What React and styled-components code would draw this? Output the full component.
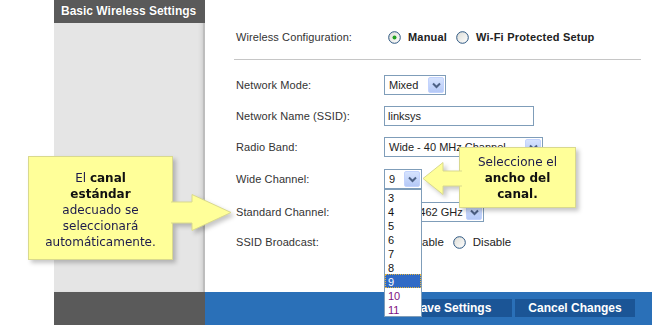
import React from "react";
import styled, { createGlobalStyle } from "styled-components";

// ---------- STYLES ----------
const Global = createGlobalStyle`
  html, body { margin: 0; padding: 0; }
  body {
    width: 652px;
    height: 325px;
    overflow: hidden;
    background: #fff;
    font-family: "Liberation Sans", Arial, sans-serif;
  }
`;

const Page = styled.div`
  position: relative;
  display: grid;
  grid-template-columns: 54px 151px 1fr;
  grid-template-rows: 292px 33px;
  width: 652px;
  height: 325px;
`;

const Gutter = styled.div`
  grid-row: 1 / 3;
  background: #fff;
`;

const Sidebar = styled.div`
  display: flex;
  flex-direction: column;
  background: #e5e5e5;
  box-shadow: inset -2px 0 0 #bdbdbd, inset -5px 0 4px -2px #c9c9c9;
`;

const SideHeader = styled.div`
  height: 23px;
  background: #5a5a5a;
  color: #fff;
  font-size: 12px;
  font-weight: bold;
  line-height: 23px;
  padding-left: 7px;
  text-shadow: 0 0 1px rgba(0, 0, 0, 0.4);
`;

const SideFooter = styled.div`
  background: #5a5a5a;
`;

const Main = styled.div`
  display: flex;
  flex-direction: column;
  padding: 27px 11px 0 31px;
`;

const Row = styled.div`
  display: flex;
  align-items: center;
  height: 20px;
  margin-top: ${(p) => p.$mt || 0}px;
`;

const Label = styled.div`
  width: 148px;
  font-size: 11px;
  color: #333;
  letter-spacing: 0.1px;
`;

const Divider = styled.div`
  height: 1px;
  background: #c6c6c6;
  margin: 12px 0 15px -2px;
`;

const RadioGroup = styled.div`
  display: flex;
  align-items: center;
  gap: 7px;
  margin-left: ${(p) => p.$offset || 0}px;
`;

const RadioText = styled.span`
  font-size: ${(p) => (p.$bold ? 11 : 11.5)}px;
  font-weight: ${(p) => (p.$bold ? "bold" : "normal")};
  letter-spacing: ${(p) => (p.$bold ? 0.2 : 0)}px;
  color: #222;
  margin-right: 2px;
`;

const SelectBox = styled.div`
  position: relative;
  display: flex;
  align-items: center;
  justify-content: space-between;
  box-sizing: border-box;
  width: ${(p) => p.$w}px;
  height: 20px;
  border: 1px solid #7f9db9;
  background: #fff;
  padding: 0 1px 0 4px;
  font-size: 11px;
  color: #222;
`;

const ArrowBtn = styled.div`
  width: 16px;
  height: 16px;
  box-sizing: border-box;
  border: 1px solid #c3d3fd;
  border-radius: 2px;
  background: linear-gradient(#d6e3fe, #b5c9f7);
  display: flex;
  align-items: center;
  justify-content: center;
`;

const TextInput = styled.div`
  box-sizing: border-box;
  width: 150px;
  height: 20px;
  border: 1px solid #7f9db9;
  padding: 0 3px;
  font-size: 11px;
  line-height: 18px;
  color: #222;
`;

const List = styled.div`
  position: absolute;
  left: -1px;
  top: 19px;
  width: 38px;
  box-sizing: border-box;
  border: 1px solid #7f9db9;
  background: #fff;
  z-index: 5;
`;

const ListItem = styled.div`
  height: 14px;
  line-height: 14px;
  font-size: 11px;
  padding-left: 2px;
  box-sizing: border-box;
  color: ${(p) => (p.$active ? "#fff" : p.$visited ? "#80117f" : "#111")};
  background: ${(p) => (p.$active ? "#316ac5" : "transparent")};
  border: 1px dotted ${(p) => (p.$active ? "#e5b53d" : "transparent")};
`;

const Footer = styled.div`
  display: flex;
  align-items: flex-start;
  justify-content: flex-end;
  gap: 3px;
  padding: 7px 17px 0 0;
  background: #2a70b8;
`;

const Button = styled.div`
  width: 120px;
  height: 18px;
  background: #1b5596;
  color: #fff;
  font-size: 12px;
  font-weight: bold;
  line-height: 18px;
  text-align: center;
`;

const Callout = styled.div`
  position: absolute;
  left: ${(p) => p.$x}px;
  top: ${(p) => p.$y}px;
  z-index: 10;
  filter: drop-shadow(3px 3px 2px rgba(0, 0, 0, 0.22));
`;

const Bubble = styled.div`
  position: relative;
  box-sizing: border-box;
  width: ${(p) => p.$w}px;
  height: ${(p) => p.$h}px;
  margin-left: ${(p) => p.$ml || 0}px;
  background: #ffff99;
  border: 1px solid #d9d98e;
  padding-top: ${(p) => p.$pt}px;
  text-align: center;
  font-family: "DejaVu Sans", Verdana, sans-serif;
  font-size: 12px;
  line-height: 16px;
  color: #1c1a4c;
  z-index: 1;

  b {
    color: #111;
  }
`;

const Pointer = styled.svg`
  position: absolute;
  left: ${(p) => p.$x}px;
  top: ${(p) => p.$y}px;
  z-index: 2;
`;

// ---------- ICONS ----------
const Radio = ({ checked }) => (
  <svg width="13" height="13" viewBox="0 0 13 13">
    <defs>
      <linearGradient id="rg" x1="0" y1="0" x2="1" y2="1">
        <stop offset="0" stopColor="#dcdcd6" />
        <stop offset="1" stopColor="#ffffff" />
      </linearGradient>
    </defs>
    <circle cx="6.5" cy="6.5" r="5.8" fill="url(#rg)" stroke="#2b5681" strokeWidth="1" />
    {checked && <circle cx="6.5" cy="6.5" r="2" fill="#21a121" />}
  </svg>
);

const Chevron = () => (
  <svg width="9" height="7" viewBox="0 0 9 7">
    <path d="M1 1.5 L4.5 5 L8 1.5" fill="none" stroke="#4d6185" strokeWidth="2" />
  </svg>
);

const Select = ({ w, value, children }) => (
  <SelectBox $w={w}>
    <span>{value}</span>
    <ArrowBtn>
      <Chevron />
    </ArrowBtn>
    {children}
  </SelectBox>
);

const channels = [3, 4, 5, 6, 7, 8, 9, 10, 11];

// ---------- COMPONENT ----------
export default function App() {
  return (
    <>
      <Global />
      <Page>
        <Gutter />
        <Sidebar>
          <SideHeader>Basic Wireless Settings</SideHeader>
        </Sidebar>

        <Main>
          <Row>
            <Label>Wireless Configuration:</Label>
            <RadioGroup $offset={4}>
              <Radio checked />
              <RadioText $bold>Manual</RadioText>
              <Radio />
              <RadioText $bold>Wi-Fi Protected Setup</RadioText>
            </RadioGroup>
          </Row>

          <Divider />

          <Row>
            <Label>Network Mode:</Label>
            <Select w={62} value="Mixed" />
          </Row>
          <Row $mt={11}>
            <Label>Network Name (SSID):</Label>
            <TextInput>linksys</TextInput>
          </Row>
          <Row $mt={11}>
            <Label>Radio Band:</Label>
            <Select w={159} value="Wide - 40 MHz Channel" />
          </Row>
          <Row $mt={12}>
            <Label>Wide Channel:</Label>
            <Select w={38} value="9">
              <List>
                {channels.map((c) => (
                  <ListItem key={c} $active={c === 9} $visited={c > 9}>
                    {c}
                  </ListItem>
                ))}
              </List>
            </Select>
          </Row>
          <Row $mt={13}>
            <Label>Standard Channel:</Label>
            <Select w={100} value="11 - 2.462 GHz" />
          </Row>
          <Row $mt={10}>
            <Label>SSID Broadcast:</Label>
            <RadioGroup $offset={4}>
              <Radio checked />
              <RadioText>Enable</RadioText>
              <Radio />
              <RadioText>Disable</RadioText>
            </RadioGroup>
          </Row>
        </Main>

        <SideFooter />
        <Footer>
          <Button>Save Settings</Button>
          <Button>Cancel Changes</Button>
        </Footer>

        {/* left callout */}
        <Callout $x={28} $y={156}>
          <Bubble $w={145} $h={104} $pt={13}>
            El <b>canal</b>
            <br />
            <b>estándar</b>
            <br />
            adecuado se
            <br />
            seleccionará
            <br />
            automáticamente.
          </Bubble>
          <Pointer $x={143} $y={38} width="62" height="38" viewBox="0 0 62 38">
            <path
              d="M0 8 H21 V0.5 L60 18.5 L21 36.5 V29 H0"
              fill="#ffff99"
              stroke="#d9d98e"
              strokeWidth="1"
            />
          </Pointer>
        </Callout>

        {/* right callout */}
        <Callout $x={422} $y={147}>
          <Pointer $x={0} $y={15} width="40" height="34" viewBox="0 0 40 34">
            <path
              d="M40 9 H21 V0.5 L1 16.5 L21 32.5 V24 H40"
              fill="#ffff99"
              stroke="#d9d98e"
              strokeWidth="1"
            />
          </Pointer>
          <Bubble $w={117} $h={61} $pt={6} $ml={37}>
            Seleccione el
            <br />
            <b>ancho del</b>
            <br />
            <b>canal.</b>
          </Bubble>
        </Callout>
      </Page>
    </>
  );
}
